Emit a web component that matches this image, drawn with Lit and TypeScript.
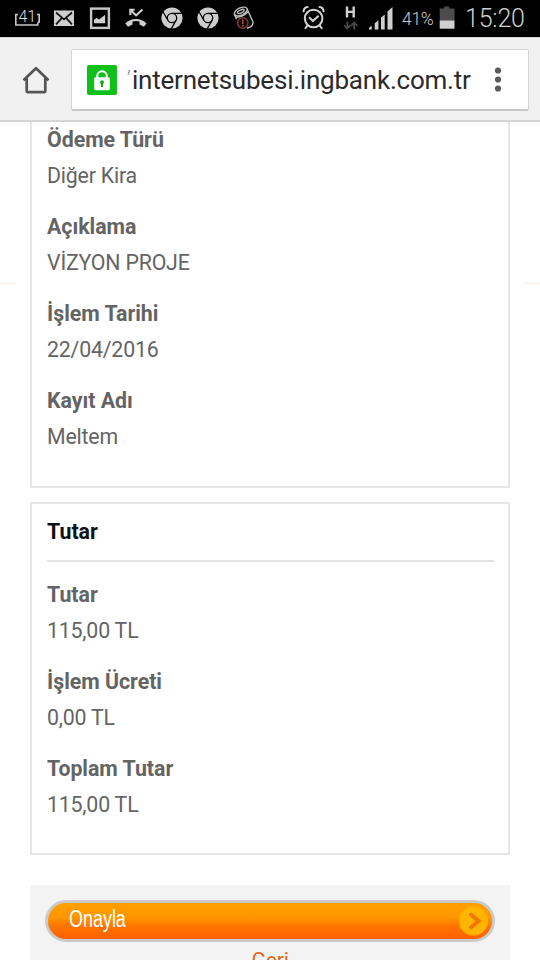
import { LitElement, html, css } from "lit";
import { customElement, property } from "lit/decorators.js";

@customElement("status-bar")
class StatusBar extends LitElement {
  static styles = css`
    :host { display: flex; height: 37px; background: #000; color: #cfcfcf; font-family: Roboto, sans-serif; }
    svg { display: block; flex: none; }
    .left { display: flex; padding-left: 10px; }
    .right { display: flex; margin-left: auto; padding-right: 16px; }
    .pct { width: 40px; padding-left: 7px; box-sizing: border-box; font-size: 17.5px; font-weight: 300; line-height: 38px; white-space: nowrap; letter-spacing: -0.3px; }
    .time { width: 59px; font-size: 25px; font-weight: 300; line-height: 38px; white-space: nowrap; letter-spacing: -0.2px; }
  `;

  chrome() {
    return html`<svg width="36" height="37" viewBox="0 0 36 37">
      <circle cx="18" cy="18" r="10.6" fill="#cdcdcd" />
      <g fill="none" stroke="#000" stroke-width="1.3">
        <circle cx="18" cy="18" r="4.7" />
        <path d="M18 13.3h9.8M13.9 20.3L9 11.8M22.1 20.3L17.2 28.9" />
      </g>
    </svg>`;
  }

  render() {
    return html`
      <div class="left">
        <svg width="36" height="37" viewBox="0 0 36 37">
          <path d="M8 14.5H5.8V25h22V22.500M27 14.500h2.200v7.500h-1.400" fill="none" stroke="#c8c8c8" stroke-width="1.6" />
          <text x="17.3" y="21.600" text-anchor="middle" font-size="16" font-weight="300" fill="#dcdcdc">41</text>
        </svg>
        <svg width="36" height="37" viewBox="0 0 36 37">
          <rect x="8" y="10.5" width="20" height="15.5" fill="#cfcfcf" />
          <path d="M10 12.500l8 6.800 8-6.800M10 24.300l5.500-5.900M26 24.300l-5.500-5.900" fill="none" stroke="#111" stroke-width="1.7" />
        </svg>
        <svg width="36" height="37" viewBox="0 0 36 37">
          <rect x="9.1" y="8.6" width="17.8" height="19.3" fill="none" stroke="#c8c8c8" stroke-width="2.4" />
          <path d="M12 23.2v-3.500l2.500-1.700 2.600 1.500 6-4.700V23.2z" fill="#cfcfcf" />
        </svg>
        <svg width="36" height="37" viewBox="0 0 36 37">
          <path d="M12.3 15V9.800h4.400M12.5 10l5.600 5.400 6.300-6" fill="none" stroke="#cfcfcf" stroke-width="2.100" />
          <path d="M7.2 23.6c5.5-6.2 16-6.2 21.4 0l-2.8 3.2-4.3-2.2v-3c-2.4-.8-4.7-.8-7 0v3l-4.4 2.2z" fill="#cfcfcf" />
        </svg>
        ${this.chrome()} ${this.chrome()}
        <svg width="36" height="37" viewBox="0 0 36 37">
          <g fill="none" stroke="#bdbdbd" stroke-width="1.4">
            <ellipse cx="14.8" cy="11.5" rx="6.9" ry="3.6" transform="rotate(-25 14.8 11.5)" />
            <ellipse cx="14.8" cy="11.4" rx="3.6" ry="1.5" transform="rotate(-25 14.8 11.4)" />
            <path d="M8.4 14.3l2.1 5M21 8.8l6 13.2c.5 3-2 5.2-6 6.2M9 16.3c4 2 10-1 13-4.6" />
          </g>
          <circle cx="16.8" cy="23" r="5.2" fill="#180706" stroke="#793a37" stroke-width="1.5" />
          <path d="M16.8 19.6v4.4M16.8 25v1.5" stroke="#a34f4a" stroke-width="1.5" />
        </svg>
      </div>
      <div class="right">
        <svg width="36" height="37" viewBox="0 0 36 37">
          <g fill="none" stroke="#d2d2d2" stroke-width="2" stroke-linecap="round">
            <circle cx="18.6" cy="18.5" r="8.8" />
            <path d="M8.600 11.3c.2-2.2 2-4 4-4.2M28.600 11.3c-.2-2.2-2-4-4-4.2M12.500 25.700l-2 2.500M24.700 25.700l2 2.500M14.600 17.700l3.3 3.4 5.3-4.8" />
          </g>
        </svg>
        <svg width="38" height="37" viewBox="0 0 38 37">
          <path d="M16 6.5v11M22.7 6.5v11M16 11.9h7" fill="none" stroke="#d2d2d2" stroke-width="2.4" />
          <path d="M16.3 21.5v7M13.2 25.2l3.1 3.3 3.1-3.3M23.2 29.5v-7M20.1 25.8l3.1-3.3 3.1 3.3" fill="none" stroke="#4a4a4a" stroke-width="1.8" />
        </svg>
        <svg width="26" height="37" viewBox="0 0 26 37">
          <path d="M-.5 29.5v-1.200l3.2-2.700v3.900zM5.700 29.5v-6.2l3.7-3v9.2zM12 29.5V17.7l3.700-3.2v15zM18.500 29.5V11.6L23.500 7v22.500z" fill="#cfcfcf" />
        </svg>
        <div class="pct">41%</div>
        <svg width="30" height="37" viewBox="0 0 30 37">
          <path d="M4.7 8.4h4.5V6.5h5v1.9H19.500v12H4.700z" fill="#4d4d4d" />
          <path d="M4.700 20.4H19.500v8.300H4.700z" fill="#d0d0d0" />
        </svg>
        <div class="time">15:20</div>
      </div>
    `;
  }
}

@customElement("browser-toolbar")
class BrowserToolbar extends LitElement {
  static styles = css`
    :host { display: flex; align-items: flex-start; height: 85px; box-sizing: border-box; background: #f1f1f1; border-top: 1px solid #d8d8d8; border-bottom: 2px solid #d6d6d6; font-family: Roboto, sans-serif; }
    svg { display: block; flex: none; }
    .home { width: 71px; padding-top: 24px; display: flex; justify-content: center; }
    .box { display: flex; align-items: center; width: 458px; height: 62px; margin-top: 11px; box-sizing: border-box; background: #fff; border: 1px solid #d6d6d6; border-bottom: 2px solid #c6c6c6; border-radius: 2px; }
    .lock { margin-left: 15px; }
    .cut { margin-left: 10px; }
    .url { flex: 1; font-size: 26px; line-height: 60px; color: #2b2b2b; white-space: nowrap; letter-spacing: -0.22px; }
    .menu { margin-right: 22px; }
  `;

  render() {
    return html`
      <div class="home">
        <svg width="30" height="34" viewBox="0 0 30 34">
          <path d="M2.500 18.200L15 6.200l12.500 12M5.700 16V29.300q0 .9.9.9h16.800q.9 0 .9-.9V16" fill="none" stroke="#555" stroke-width="2.700" stroke-linejoin="round" />
        </svg>
      </div>
      <div class="box">
        <svg class="lock" width="30" height="30" viewBox="0 0 30 30">
          <rect width="30" height="30" rx="2" fill="#10bf1a" />
          <path d="M10.200 13v-2a4.800 4.800 0 0 1 9.600 0V13" fill="none" stroke="#fff" stroke-width="2" />
          <rect x="7.200" y="12.300" width="15.600" height="13" rx="1.500" fill="#fff" />
          <path d="M15 15.300a2 2 0 0 1 1 3.700v3h-2v-3a2 2 0 0 1 1-3.700z" fill="#10a61a" />
        </svg>
        <svg class="cut" width="5" height="30" viewBox="0 0 5 30">
          <path d="M2.700 5L1 9.500" stroke="#888" stroke-width="1.200" />
        </svg>
        <div class="url">internetsubesi.ingbank.com.tr</div>
        <svg class="menu" width="16" height="30" viewBox="0 0 16 30">
          <g fill="#5a5a5a"><circle cx="8" cy="5.500" r="3.100" /><circle cx="8" cy="14.500" r="3.100" /><circle cx="8" cy="23.500" r="3.100" /></g>
        </svg>
      </div>
    `;
  }
}

@customElement("detail-list")
class DetailList extends LitElement {
  @property({ attribute: false }) rows: string[][] = [];

  static styles = css`
    :host { display: block; font-family: Roboto, sans-serif; font-size: 21.33px; line-height: 36px; color: #646464; }
    dl { display: grid; gap: 15px; margin: 0; }
    dt { font-weight: 700; letter-spacing: -0.03px; }
    dd { margin: 0; letter-spacing: -0.2px; }
  `;

  render() {
    return html`<dl>
      ${this.rows.map(([label, value]) => html`<div><dt>${label}</dt><dd>${value}</dd></div>`)}
    </dl>`;
  }
}

@customElement("app-root")
class AppRoot extends LitElement {
  static styles = css`
    :host { display: block; height: 960px; overflow: hidden; background: #fff; font-family: Roboto, sans-serif; }
    .page { display: grid; grid-template-columns: 16px 480px 16px; justify-content: space-between; }
    .edge { height: 1px; margin-top: 161px; background: #f7eee8; }
    .card { box-sizing: border-box; border: 2px solid #e6e6e6; padding: 0 14px 0 15px; }
    .first { height: 366px; border-top: 0; }
    .second { height: 353px; margin-top: 14px; }
    h2 { height: 58px; margin: 0 0 15px; box-sizing: border-box; border-bottom: 2px solid #e4e4e4; font-size: 21.33px; line-height: 55px; color: #111; }
    .actions { height: 75px; margin-top: 30px; padding: 15px 15px 0; box-sizing: border-box; background: #f3f3f3; overflow: hidden; }
    .confirm { display: flex; align-items: center; justify-content: space-between; width: 100%; height: 42px; box-sizing: border-box; padding: 0 2px 0 21px; border: 3px solid #cacaca; border-radius: 21px; background: linear-gradient(#ffa000 0%, #ff9600 40%, #ff7400 65%, #ff6000 100%); font: 23px "Liberation Sans", sans-serif; color: #fff; }
    .text { display: block; transform: scaleX(0.78); transform-origin: left; padding-bottom: 4px; }
    .confirm svg { display: block; }
    .back { margin-top: 6px; text-align: center; font-size: 21.33px; line-height: 26px; letter-spacing: -0.3px; color: #dc6a24; }
  `;

  render() {
    return html`
      <status-bar></status-bar>
      <browser-toolbar></browser-toolbar>
      <div class="page">
        <div class="edge"></div>
        <main>
          <section class="card first">
            <detail-list .rows=${[
              ["Ödeme Türü", "Diğer Kira"],
              ["Açıklama", "VİZYON PROJE"],
              ["İşlem Tarihi", "22/04/2016"],
              ["Kayıt Adı", "Meltem"],
            ]}></detail-list>
          </section>
          <section class="card second">
            <h2>Tutar</h2>
            <detail-list .rows=${[
              ["Tutar", "115,00 TL"],
              ["İşlem Ücreti", "0,00 TL"],
              ["Toplam Tutar", "115,00 TL"],
            ]}></detail-list>
          </section>
          <div class="actions">
            <button class="confirm">
              <span class="text">Onayla</span>
              <svg width="32" height="32" viewBox="0 0 32 32">
                <circle cx="15.500" cy="16" r="14.500" fill="#ffb400" />
                <path d="M13 9.500l7.500 6.500-7.500 6.500" fill="none" stroke="#f07800" stroke-width="4" stroke-linecap="round" />
              </svg>
            </button>
            <div class="back">Geri</div>
          </div>
        </main>
        <div class="edge"></div>
      </div>
    `;
  }
}
